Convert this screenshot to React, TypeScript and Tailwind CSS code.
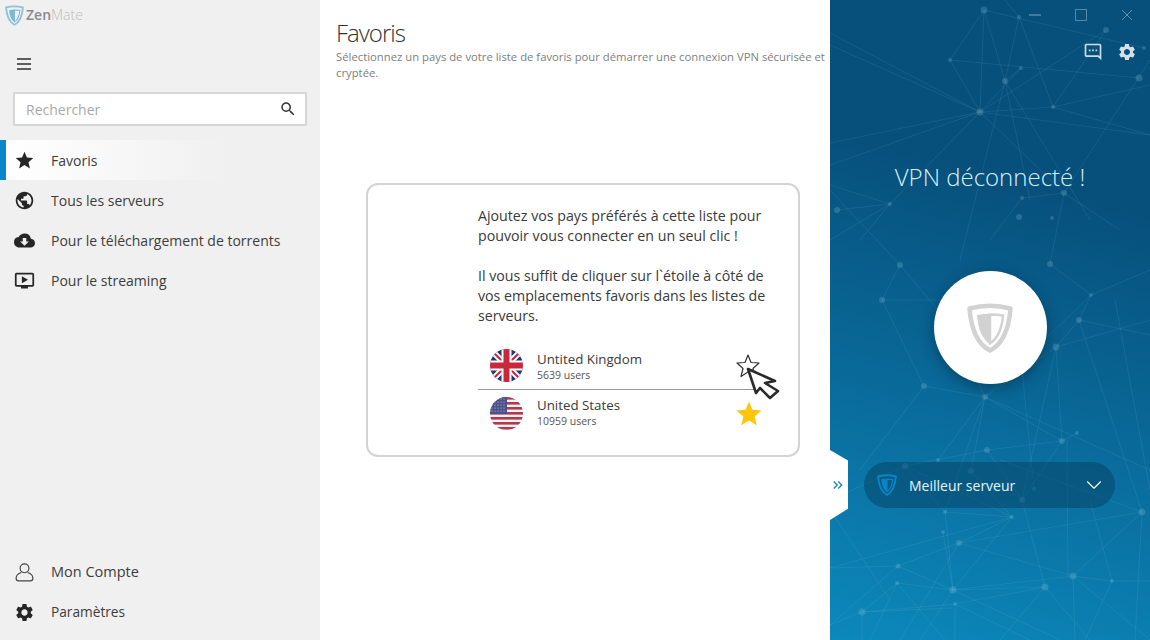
import { MdStar, MdPublic, MdCloudDownload, MdOndemandVideo, MdSearch, MdSettings, MdOutlineSms, MdKeyboardDoubleArrowRight } from 'react-icons/md'
import { ChevronDown } from 'lucide-react'

const font = "font-['Open_Sans','Noto_Sans',sans-serif]"

const navigation = [
  { name: 'Favoris', icon: MdStar, active: true },
  { name: 'Tous les serveurs', icon: MdPublic },
  { name: 'Pour le téléchargement de torrents', icon: MdCloudDownload },
  { name: 'Pour le streaming', icon: MdOndemandVideo },
]

// network drawing behind the right panel, coords are panel relative
const nodes: [number, number, number][] = [
  [154, 10, 3.5], [189, 17, 2], [276, 30, 3], [120, 60, 2], [191, 68, 2], [175, 81, 3], [150, 112, 3.5], [223, 107, 2],
  [309, 78, 3.5], [314, 48, 2], [234, 193, 3], [192, 198, 2], [60, 204, 2], [7, 210, 3], [189, 217, 3], [222, 218, 2],
  [70, 265, 3], [220, 264, 3], [261, 295, 2], [52, 300, 3], [249, 320, 3], [226, 347, 3.5], [94, 386, 3], [155, 397, 3],
  [232, 441, 3], [247, 433, 2], [157, 450, 3], [108, 460, 2], [75, 466, 3], [141, 471, 3], [204, 489, 2], [192, 500, 3],
  [312, 512, 3.5], [115, 512, 2], [182, 517, 2], [113, 532, 2], [129, 543, 3], [68, 566, 2.5], [67, 583, 2], [123, 590, 3.5],
  [125, 604, 2], [215, 587, 3.5], [243, 576, 3.5], [282, 581, 2], [32, 612, 3.5],
]

const edges: [number, number, number, number][] = [
  [154, 10, 120, 60], [154, 10, 150, 112], [154, 10, 175, 81], [154, 10, 314, 48], [120, 60, 150, 112], [120, 60, 309, 78],
  [189, 17, 175, 81], [189, 17, 223, 107], [189, 17, 175, 0], [150, 112, 276, 30], [150, 112, 223, 107], [223, 107, 320, 85],
  [223, 107, 276, 30], [0, 33, 150, 112], [0, 45, 150, 112], [0, 143, 150, 112], [0, 165, 150, 112], [150, 112, 60, 204],
  [150, 112, 320, 135], [150, 112, 234, 193], [175, 81, 200, 200], [175, 81, 260, 220], [320, 60, 234, 193], [175, 81, 191, 68],
  [191, 68, 150, 112], [223, 107, 320, 135], [175, 81, 130, 260], [0, 185, 60, 204], [0, 240, 60, 204], [60, 204, 7, 210],
  [0, 190, 70, 265], [60, 204, 30, 240], [234, 193, 220, 264], [192, 198, 234, 193], [192, 198, 160, 240], [234, 193, 290, 230],
  [70, 265, 52, 300], [70, 265, 150, 360], [52, 300, 94, 386], [52, 300, 120, 300], [220, 264, 261, 295], [261, 295, 249, 320],
  [249, 320, 226, 347], [249, 320, 320, 335], [261, 295, 155, 397], [261, 295, 320, 270], [226, 347, 320, 320], [226, 347, 155, 397],
  [94, 386, 155, 397], [94, 386, 30, 470], [155, 397, 108, 460], [155, 397, 320, 470], [155, 397, 141, 471], [155, 397, 232, 441],
  [155, 397, 115, 512], [226, 347, 232, 441], [226, 347, 192, 500], [249, 320, 312, 512], [232, 441, 157, 450], [232, 441, 247, 433],
  [232, 441, 192, 500], [157, 450, 75, 466], [157, 450, 192, 500], [75, 466, 115, 512], [75, 466, 182, 517], [141, 471, 182, 517],
  [115, 512, 182, 517], [182, 517, 129, 543], [129, 543, 312, 512], [113, 532, 123, 590], [129, 543, 243, 576], [129, 543, 68, 566],
  [0, 568, 182, 517], [0, 568, 68, 566], [68, 566, 0, 625], [68, 566, 123, 590], [67, 583, 123, 590], [67, 583, 40, 640],
  [67, 583, 115, 640], [129, 543, 70, 640], [123, 590, 215, 587], [123, 590, 243, 576], [125, 604, 215, 587], [123, 590, 90, 640],
  [125, 604, 125, 640], [125, 604, 200, 640], [123, 590, 230, 640], [215, 587, 170, 640], [215, 587, 260, 640], [243, 576, 282, 581],
  [243, 576, 320, 640], [243, 576, 245, 640], [282, 581, 320, 581], [282, 581, 255, 640], [312, 512, 243, 576], [312, 512, 305, 640],
  [32, 612, 0, 625], [32, 612, 123, 608], [32, 612, 67, 583], [32, 612, 32, 640], [192, 500, 215, 587], [237, 440, 238, 576],
  [260, 500, 282, 581], [115, 512, 123, 590], [32, 612, 125, 604], [170, 460, 312, 512], [285, 300, 320, 490], [185, 300, 204, 489],
  [120, 320, 155, 397], [0, 510, 60, 600], [182, 517, 123, 590], [0, 500, 75, 466],
]

function Shield({ className, color, fill }: { className: string; color: string; fill: string }) {
  return (
    <svg viewBox="0 0 46 50" className={className} fill="none">
      <path d="M23 47.5C12 42 4.500 30 2.500 5.500Q23 0 43.500 5.500C41.500 30 34 42 23 47.500Z" stroke={color} strokeWidth="4.500" strokeLinejoin="round" />
      <path d="M10 12Q17 10.500 23 10.500V41C15 36 11 26 10 12Z" fill={fill} />
      <path d="M23 11.500Q30 11.500 36 12.500C35 26 31 35 23 40.500Z" stroke={fill} strokeWidth="2.500" strokeLinejoin="round" />
    </svg>
  )
}

function UkFlag() {
  return (
    <svg viewBox="0 0 33 33" className="w-[33px] h-[33px] shrink-0">
      <defs>
        <clipPath id="uk-circle"><circle cx="16.5" cy="16.5" r="16.5" /></clipPath>
      </defs>
      <g clipPath="url(#uk-circle)">
        <rect width="33" height="33" fill="#27356f" />
        <path d="M0 0L33 33M33 0L0 33" stroke="#fff" strokeWidth="6" />
        <path d="M0 0L33 33M33 0L0 33" stroke="#c8283c" strokeWidth="2" />
        <path d="M16.500 0V33M0 16.500H33" stroke="#fff" strokeWidth="10" />
        <path d="M16.500 0V33M0 16.500H33" stroke="#c8283c" strokeWidth="6" />
      </g>
    </svg>
  )
}

function UsFlag() {
  const stripes = [0, 5, 10, 15, 20, 25, 30]
  return (
    <svg viewBox="0 0 33 33" className="w-[33px] h-[33px] shrink-0">
      <defs>
        <clipPath id="us-circle"><circle cx="16.5" cy="16.5" r="16.5" /></clipPath>
      </defs>
      <g clipPath="url(#us-circle)">
        <rect width="33" height="33" fill="#f2f2f2" />
        {stripes.map((y) => <rect key={y} y={y} width="33" height="2.600" fill="#b4384e" />)}
        <rect width="17" height="17" fill="#4a5288" />
        {[2, 5, 8, 11, 14].map((y) => [2, 5, 8, 11, 14].map((x) => <circle key={`${x}-${y}`} cx={x} cy={y} r="0.600" fill="#c9cce0" />))}
      </g>
    </svg>
  )
}

interface RowProps {
  flag: React.ReactNode
  name: string
  users: string
  star: React.ReactNode
  border?: boolean
}

function Row({ flag, name, users, star, border }: RowProps) {
  return (
    <div className={`relative flex items-center h-[46px] ${border ? 'border-b border-[#9a9a9a]' : ''}`}>
      <div className={`ml-3 mr-3.5 ${border ? 'mb-[2px]' : ''}`}>{flag}</div>
      <div className={`flex flex-col ${border ? '' : 'mb-[2px]'}`}>
        <span className="text-[13.3px] leading-[18px] text-[#3a3a3a]">{name}</span>
        <span className="text-[10.5px] leading-[15px] text-[#555]">{users}</span>
      </div>
      {star}
    </div>
  )
}

export default function App() {
  return (
    <div className={`flex w-[1150px] h-[640px] overflow-hidden bg-white ${font}`}>
      {/* Sidebar */}
      <aside className="flex flex-col w-[320px] h-full bg-[#f0f0f0] shrink-0">
        <div className="flex items-center h-[30px] pl-[5px]">
          <Shield className="w-[19px] h-[21px]" color="#8fc3dc" fill="#7fb8d6" />
          <span className="ml-[2px] mb-[1px] text-[14px] leading-none text-[#bdbdbd] font-light"><span className="font-semibold text-[#8a8a8a]">Zen</span>Mate</span>
        </div>
        <div className="flex items-center h-[48px] pl-[17px] mt-[10px]">
          <svg viewBox="0 0 14 12" className="w-[14px] h-[12px]" stroke="#2d2d2d" strokeWidth="1.300">
            <path d="M0 1H14M0 6H14M0 11H14" />
          </svg>
        </div>
        <div className="flex items-center mx-[13px] mt-[4px] h-[34px] bg-white border-2 border-[#d6d6d6] pl-[11px] pr-[8px]">
          <input placeholder="Rechercher" className="flex-1 min-w-0 bg-transparent text-[14px] outline-none placeholder:text-[#a9a9a9]" />
          <MdSearch className="w-[18px] h-[18px] text-[#333]" />
        </div>
        <nav className="mt-[14px]">
          {navigation.map((item) => (
            <div
              key={item.name}
              className={`flex items-center h-[40px] text-[14px] text-[#3d3d3d] ${item.active ? 'border-l-[6px] border-[#0a87c9] pl-[8px] bg-gradient-to-r from-white to-[#f0f0f0] to-70%' : 'pl-[14px]'}`}
            >
              <item.icon className="w-[21px] h-[21px] text-[#262626] mr-[16px]" />
              {item.name}
            </div>
          ))}
        </nav>
        <div className="mt-auto mb-[8px]">
          <div className="flex items-center h-[40px] pl-[14px] text-[14.5px] text-[#3d3d3d]">
            <svg viewBox="0 0 20 20" className="w-[21px] h-[21px] mr-[16px]" fill="none" stroke="#444" strokeWidth="1.100">
              <circle cx="10" cy="6" r="4.200" />
              <path d="M7 10C4 11 2 13 2 15.500C2 17 3 18 4.500 18H15.500C17 18 18 17 18 15.500C18 13 16 11 13 10" />
            </svg>
            Mon Compte
          </div>
          <div className="flex items-center h-[40px] pl-[14px] text-[13.7px] text-[#3d3d3d]">
            <MdSettings className="w-[21px] h-[21px] text-[#262626] mr-[16px]" />
            Paramètres
          </div>
        </div>
      </aside>

      {/* Main */}
      <main className="w-[510px] h-full shrink-0 pl-[16px]">
        <h1 className="pt-[17px] text-[24px] leading-[32px] font-light tracking-[-1px] text-[#333]">Favoris</h1>
        <p className="text-[11.3px] leading-[15.5px] text-[#808080] w-[494px]">
          Sélectionnez un pays de votre liste de favoris pour démarrer une connexion VPN sécurisée et cryptée.
        </p>
        <div className="ml-[30px] mt-[103px] w-[434px] h-[274px] border-2 border-[#d4d4d4] rounded-[12px] pl-[110px] pr-[30px] pt-[21px]">
          <p className="text-[14.2px] leading-[20px] text-[#3a3a3a]">Ajoutez vos pays préférés à cette liste pour pouvoir vous connecter en un seul clic !</p>
          <p className="mt-[20px] text-[14.2px] leading-[20px] text-[#3a3a3a]">Il vous suffit de cliquer sur l`étoile à côté de vos emplacements favoris dans les listes de serveurs.</p>
          <div className="mt-[18px] w-[286px]">
            <Row
              flag={<UkFlag />}
              name="Untited Kingdom"
              users="5639 users"
              border
              star={
                <svg viewBox="0 0 46 46" className="absolute left-[258px] top-[10px] w-[46px] h-[46px]" fill="none" strokeLinejoin="round">
                  <path d="M12 1L15 8.500L23 9L17 14.500L19 22.500L12 18L5 22.500L7 14.500L1 9L9 8.500Z" fill="#fff" stroke="#333" strokeWidth="1.200" />
                  <path d="M12 15L39 27L29 29L42 37L34 44L24 34L20 39Z" fill="#fff" stroke="#2a2a2a" strokeWidth="2.600" />
                </svg>
              }
            />
            <Row
              flag={<UsFlag />}
              name="United States"
              users="10959 users"
              star={<MdStar className="absolute left-[256px] top-[9px] w-[30px] h-[30px] text-[#fcc60c]" />}
            />
          </div>
        </div>
      </main>

      {/* VPN panel */}
      <section className="relative w-[320px] h-full shrink-0 flex flex-col items-center bg-[linear-gradient(195deg,#07507c_30%,#0c88bb_100%)]">
        <svg viewBox="0 0 320 640" className="absolute inset-0 w-[320px] h-[640px]">
          {edges.map(([x1, y1, x2, y2], i) => (
            <line key={i} x1={x1} y1={y1} x2={x2} y2={y2} stroke="#a8d8ee" strokeOpacity="0.1" strokeWidth="1" />
          ))}
          {nodes.map(([cx, cy, r], i) => (
            <circle key={i} cx={cx} cy={cy} r={r} fill="#a8d8ee" fillOpacity="0.2" />
          ))}
        </svg>

        <div className="relative flex justify-end items-center gap-[34px] w-full h-[30px] pr-[17px]">
          <span className="w-[12px] h-[1.5px] bg-[#3f7d9f]" />
          <span className="w-[12px] h-[12px] border border-[#4f88a8]" />
          <svg viewBox="0 0 12 12" className="w-[12px] h-[12px]" stroke="#5f93ae" strokeWidth="1"><path d="M1 1L11 11M11 1L1 11" /></svg>
        </div>
        <div className="relative flex justify-end items-center gap-[14px] w-full h-[44px] pr-[13px]">
          <MdOutlineSms className="w-[20px] h-[20px] text-[#cfdde5] -scale-x-100" />
          <MdSettings className="w-[20px] h-[20px] text-[#d5dfe6]" />
        </div>
        <div className="relative mt-[84px] text-[24px] leading-[38px] font-light text-[#d9eff9]">VPN déconnecté !</div>
        <div className="relative mt-[75px] w-[113px] h-[113px] rounded-full bg-white shadow-[0_4px_14px_rgba(0,30,50,0.45)] flex items-center justify-center">
          <Shield className="w-[46px] h-[50px]" color="#d2d2d2" fill="#d2d2d2" />
        </div>
        <div className="relative mt-[78px] ml-[-1px] flex items-center w-[251px] h-[46px] rounded-full bg-[#063f61]/50 pl-[13px] pr-[8px] text-[14px] text-[#e6f4fb]">
          <Shield className="w-[20px] h-[22px]" color="#0a86c6" fill="#0a86c6" />
          <span className="ml-[12px]">Meilleur serveur</span>
          <ChevronDown className="ml-auto w-[26px] h-[26px] text-white" strokeWidth={1} />
        </div>

        {/* collapse tab */}
        <div className="absolute left-0 top-[450px] w-[18px] h-[70px] bg-white [clip-path:polygon(0_0,100%_15%,100%_84%,0_100%)] flex items-center justify-center">
          <MdKeyboardDoubleArrowRight className="w-[16px] h-[16px] text-[#1c83b8] mr-[2px]" />
        </div>
      </section>
    </div>
  )
}
